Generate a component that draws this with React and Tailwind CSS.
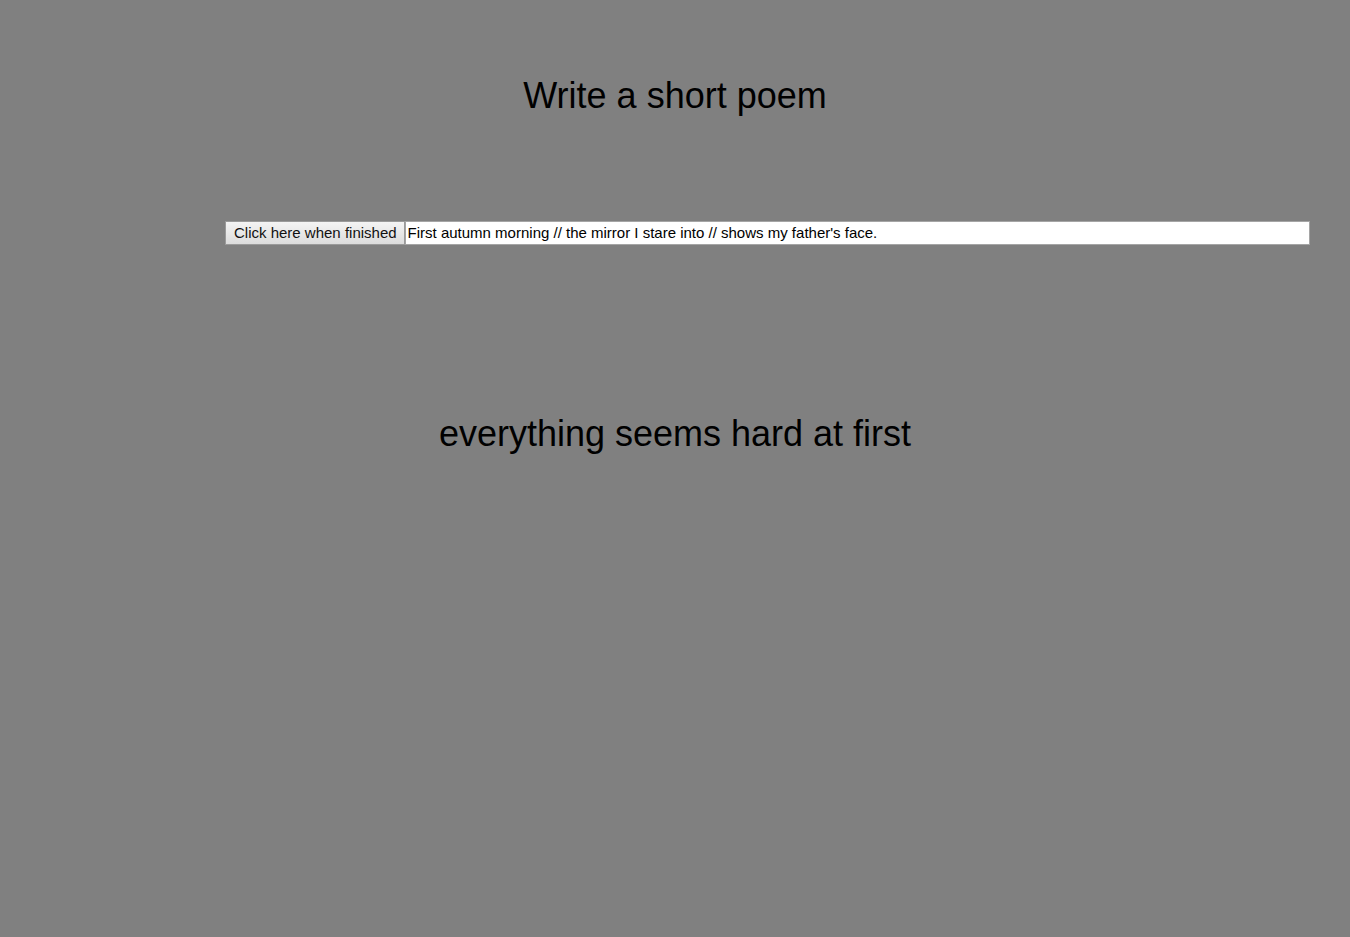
export default function App() {
  return (
    <div className="min-h-screen bg-[#808080] text-black font-['Liberation_Sans',Arial,sans-serif]">
      <h1 className="pt-[74px] text-center text-[36px] leading-[44px]">
        Write a short poem
      </h1>

      <div className="mt-[103px] ml-[225px] flex h-[24px] w-[1085px]">
        <button className="h-full shrink-0 border border-[#9a9a9a] bg-gradient-to-b from-[#f4f4f4] to-[#dcdcdc] pb-[1px] pl-[8px] pr-[7px] text-[15px] leading-none text-[#111]">
          Click here when finished
        </button>
        <input
          className="h-full min-w-0 flex-1 border border-[#a5a5a5] bg-white pb-[1px] pl-[2px] pr-[2px] text-[15px] text-black outline-none"
          defaultValue="First autumn morning // the mirror I stare into // shows my father's face."
        />
      </div>

      <p className="mt-[166px] text-center text-[36px] leading-[46px]">
        everything seems hard at first
      </p>
    </div>
  );
}
